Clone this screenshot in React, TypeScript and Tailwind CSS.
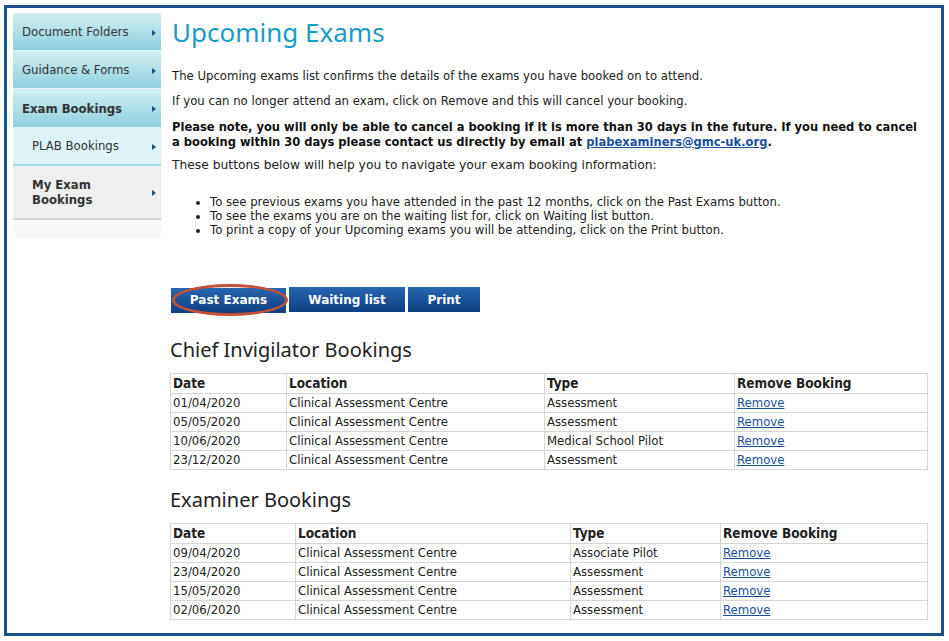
import * as React from 'react';

interface Booking {
  date: string;
  location: string;
  type: string;
}

interface SideLink {
  label: string;
  kind: 'top' | 'topActive' | 'sub' | 'subActive';
}

const sideLinks: SideLink[] = [
  { label: 'Document Folders', kind: 'top' },
  { label: 'Guidance & Forms', kind: 'top' },
  { label: 'Exam Bookings', kind: 'topActive' },
  { label: 'PLAB Bookings', kind: 'sub' },
  { label: 'My Exam Bookings', kind: 'subActive' },
];

const chiefBookings: Booking[] = [
  { date: '01/04/2020', location: 'Clinical Assessment Centre', type: 'Assessment' },
  { date: '05/05/2020', location: 'Clinical Assessment Centre', type: 'Assessment' },
  { date: '10/06/2020', location: 'Clinical Assessment Centre', type: 'Medical School Pilot' },
  { date: '23/12/2020', location: 'Clinical Assessment Centre', type: 'Assessment' },
];

const examinerBookings: Booking[] = [
  { date: '09/04/2020', location: 'Clinical Assessment Centre', type: 'Associate Pilot' },
  { date: '23/04/2020', location: 'Clinical Assessment Centre', type: 'Assessment' },
  { date: '15/05/2020', location: 'Clinical Assessment Centre', type: 'Assessment' },
  { date: '02/06/2020', location: 'Clinical Assessment Centre', type: 'Assessment' },
];

const Arrow = () => (
  <svg width="4" height="6" viewBox="0 0 4 6" className="shrink-0">
    <path d="M0 0 L4 3 L0 6 Z" fill="#1d4f8a" />
  </svg>
);

const SideNav = () => {
  const itemClass = (kind: SideLink['kind']) => {
    switch (kind) {
      case 'top':
        return 'h-[38px] pl-[9px] bg-gradient-to-b from-[#d3f0f2] to-[#8ccfdf] border-b border-[#e6f6f8]';
      case 'topActive':
        return 'h-[38px] pl-[9px] font-bold bg-gradient-to-b from-[#d3f0f2] to-[#8ccfdf]';
      case 'sub':
        return 'h-[39px] pl-[19px] bg-[#def3f8] border-b-2 border-[#a3dae7]';
      case 'subActive':
        return 'h-[54px] pl-[19px] font-bold bg-[#efefef] border-b-2 border-[#d4d4d4]';
    }
  };

  return (
    <div className="w-[148px] shrink-0">
      {sideLinks.map(link => (
        <div
          key={link.label}
          className={`flex items-center justify-between pt-[2px] pr-[5px] text-[11.7px] leading-[15px] text-[#333] ${itemClass(link.kind)}`}
        >
          <span className={link.kind === 'subActive' ? 'w-[80px]' : ''}>{link.label}</span>
          <Arrow />
        </div>
      ))}
      <div className="h-[18px] bg-[#f8f8f8]" />
    </div>
  );
};

const BookingTable = (props: { rows: Booking[]; cols: string[] }) => {
  const cell = 'border border-[#d6d6d6] px-[2px] text-left align-middle';
  return (
    <table
      className="w-[757px] border-collapse text-[13px] leading-[17px] text-[#222] [font-family:Tahoma,'DejaVu_Sans_Condensed','DejaVu_Sans',sans-serif]"
      style={{ tableLayout: 'fixed' }}
    >
      <colgroup>
        {props.cols.map((w, i) => (
          <col key={i} style={{ width: w }} />
        ))}
      </colgroup>
      <thead>
        <tr className="h-[20px] text-[13.5px]">
          <th className={`${cell} font-bold`}>Date</th>
          <th className={`${cell} font-bold`}>Location</th>
          <th className={`${cell} font-bold`}>Type</th>
          <th className={`${cell} font-bold`}>Remove Booking</th>
        </tr>
      </thead>
      <tbody>
        {props.rows.map(row => (
          <tr key={row.date} className="h-[19px]">
            <td className={cell}>{row.date}</td>
            <td className={cell}>{row.location}</td>
            <td className={cell}>{row.type}</td>
            <td className={cell}>
              <a href="#" className="text-[#1c4f9c] underline">
                Remove
              </a>
            </td>
          </tr>
        ))}
      </tbody>
    </table>
  );
};

const navButton =
  'h-[25px] bg-gradient-to-b from-[#2766b0] to-[#0f3f82] text-white text-[12px] font-bold';

export default function App() {
  return (
    <div className="w-[949px] h-[641px] bg-white pt-[5px] pl-[4px] [font-family:Verdana,'DejaVu_Sans',sans-serif]">
      <div className="w-[940px] h-[631px] border-[3px] border-[#1d4f8a] pt-[5px] pl-[6px] flex">
        <SideNav />

        <div className="ml-[9px] flex-1 text-[#222]">
          <h1 className="mt-[2px] ml-[2px] text-[26px] leading-[34px] text-[#1a9bc6] [font-family:'Noto_Sans',sans-serif]">
            Upcoming Exams
          </h1>

          <div className="ml-[2px] text-[11.7px] leading-[15px]">
            <p className="mt-[20px]">
              The Upcoming exams list confirms the details of the exams you have booked on to attend.
            </p>
            <p className="mt-[10px]">
              If you can no longer attend an exam, click on Remove and this will cancel your booking.
            </p>
            <p className="mt-[10px] w-[750px] font-bold text-[12.8px] leading-[15px] text-[#111] [font-family:Tahoma,'DejaVu_Sans_Condensed','DejaVu_Sans',sans-serif]">
              Please note, you will only be able to cancel a booking if it is more than 30 days in the future. If you need to
              cancel a booking within 30 days please contact us directly by email at{' '}
              <a href="#" className="text-[#1c4f9c] underline">
                plabexaminers@gmc-uk.org
              </a>
              .
            </p>
            <p className="mt-[9px] text-[12.3px]">
              These buttons below will help you to navigate your exam booking information:
            </p>
            <ul className="mt-[22px] ml-[26px] list-disc pl-[12px] leading-[14px]">
              <li>To see previous exams you have attended in the past 12 months, click on the Past Exams button.</li>
              <li>To see the exams you are on the waiting list for, click on Waiting list button.</li>
              <li>To print a copy of your Upcoming exams you will be attending, click on the Print button.</li>
            </ul>
          </div>

          <div className="mt-[50px] flex gap-[3px] ml-[1px]">
            <div className="relative">
              <button className={`${navButton} w-[115px]`}>Past Exams</button>
              <span className="absolute left-[1px] top-[-3px] h-[32px] w-[116px] rounded-[50%] border-[3px] border-[#c4513a] pointer-events-none" />
            </div>
            <button className={`${navButton} w-[116px]`}>Waiting list</button>
            <button className={`${navButton} w-[72px]`}>Print</button>
          </div>

          <h2 className="mt-[24px] text-[20px] leading-[26px] text-[#222] [font-family:'Noto_Sans',sans-serif]">
            Chief Invigilator Bookings
          </h2>
          <div className="mt-[10px]">
            <BookingTable rows={chiefBookings} cols={['116px', '258px', '190px', '193px']} />
          </div>

          <h2 className="mt-[17px] text-[20px] leading-[26px] text-[#222] [font-family:'Noto_Sans',sans-serif]">
            Examiner Bookings
          </h2>
          <div className="mt-[10px]">
            <BookingTable rows={examinerBookings} cols={['125px', '275px', '150px', '207px']} />
          </div>
        </div>
      </div>
    </div>
  );
}
